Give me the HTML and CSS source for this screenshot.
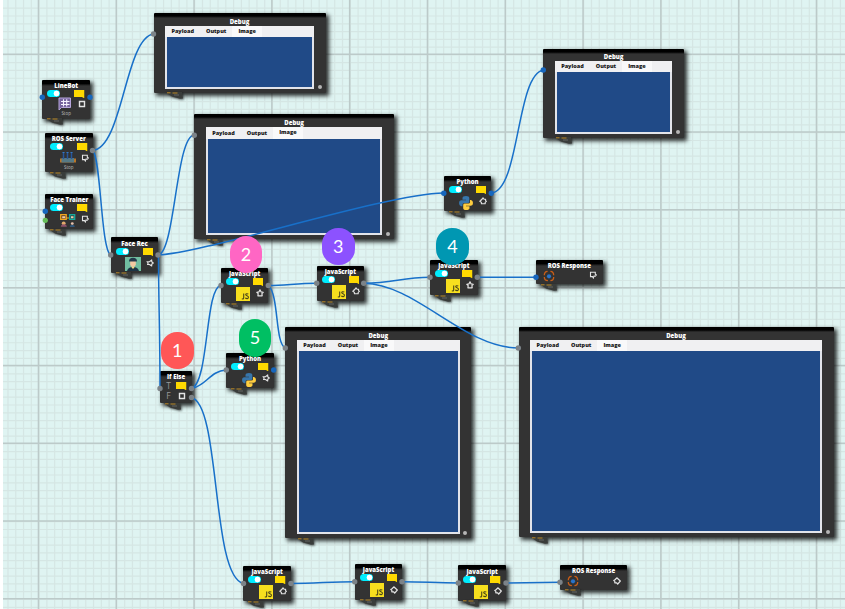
FILE: index.html
```html
<!DOCTYPE html>
<html lang="en">
<head>
<meta charset="utf-8">
<title>Flow editor</title>
<link rel="stylesheet" href="styles.css">
</head>
<body>
<svg class="defs" width="0" height="0" aria-hidden="true">
  <symbol id="note" viewBox="0 0 10 8"><path d="M0 0h10v8l-2.4-1.3H0z" fill="#ffd900"/></symbol>
  <symbol id="gear" viewBox="0 0 8 8"><path d="M4 .8 5 2.2h1.6v1.4L7.4 4.4 6.2 5.4v1.4H2.4V5.4L.8 4.2 2.2 3.2V2.2H3.200z" fill="none" stroke="#e4e4e4" stroke-width="1.1" stroke-linejoin="round"/></symbol>
  <symbol id="star" viewBox="0 0 8 8"><path d="M4 .9 5 2.800 7.200 3.300 5.900 4.700 6.200 6.800H1.900L2.200 4.700.8 3.300 3 2.800z" fill="none" stroke="#e4e4e4" stroke-width="1.2" stroke-linejoin="round"/></symbol>
  <symbol id="diamond" viewBox="0 0 8 8"><path d="M3.800.8 7.300 4 4.700 7.200 3.700 5.800H1.800V4.300L.8 3.600 2.300 2.500z" fill="none" stroke="#e4e4e4" stroke-width="1.200" stroke-linejoin="round"/></symbol>
  <symbol id="horn" viewBox="0 0 8 8"><path d="M1 2.700H3.500L5.700.9V2.700L7.300 4 5.700 5.300V7L3.500 5.500H1.500L2.200 4z" fill="none" stroke="#e4e4e4" stroke-width="1.100" stroke-linejoin="round"/></symbol>
  <symbol id="box" viewBox="0 0 8 8"><path d="M1.500 1.500h5v5h-5z" fill="none" stroke="#e4e4e4" stroke-width="1.400"/></symbol>
  <symbol id="tagbox" viewBox="0 0 8 8"><path d="M1.500 1.300H6.300V3.200L7.300 4 6.300 5.100H5L4.300 7 3.500 5.600H1.500z" fill="none" stroke="#e4e4e4" stroke-width="1.100"/></symbol>
  <symbol id="js" viewBox="0 0 14 14"><path d="M0 0h14v14H0z" fill="#f7df1e"/><path d="M7.700 6.500v4.600q0 1.200-1.900.7M12.300 7.100q-2.600-1-2.600.4 0 .8 1.300 1.200 1.700.6 1.400 1.900-.6 1.800-3.200.5" fill="none" stroke="#4a4618" stroke-width="1.100"/></symbol>
  <symbol id="python" viewBox="0 0 14 14"><path d="M7 0Q3.500 0 3.500 2v1.700H7v.6H2Q0 4.300 0 7t2 3.200h1.500V8.500Q3.500 7 5.200 7h3.500q1.600 0 1.600-1.500V2Q10.300 0 7 0" fill="#3776ab"/><path d="M7 14q3.500 0 3.500-2v-1.700H7v-.6h5q2 0 2-2.700t-2-3h-1v2.200Q11 7.600 9.300 7.600H5.800Q4.200 7.600 4.200 9v3q0 2 2.800 2" fill="#ffce3f"/></symbol>
  <symbol id="hash" viewBox="0 0 14 14"><path d="M1 1h11.500v9.500H3.500L1 13z" fill="#75639e" stroke="#b7a6dc"/><path d="M3 4.500h8.500M3 7.500h8.500M5.500 2.200v7.300M8.700 2.200v7.300" stroke="#f5f1ff" stroke-width="1.100"/></symbol>
  <symbol id="server" viewBox="0 0 16 14"><path d="M0 7.500h16v4H0z" fill="#b87528"/><path d="M1.500 7h12.500v4.500H1.500z" fill="#567985"/><path d="M3.500 1v7M7.500 1v7M11.500 1v7" stroke="#27569b" stroke-width="1.500"/><path d="M2.500 1.500h2M6.500 1.500h2M10.500 1.500h2" stroke="#3478c4"/></symbol>
  <symbol id="faces" viewBox="0 0 16 14"><path d="M.7.700h5.500v4.600H.7z" fill="#5a3c28" stroke="#f0a71d" stroke-width="1.300"/><path d="M9.700.7h5v4.600h-5z" fill="#264d50" stroke="#16a99b" stroke-width="1.300"/><path d="M2.200 2.300h3v2h-3zM11 2.200h2.500v2H11z" fill="#f4cda8"/><path d="M6 4h3" stroke="#eeb020"/><circle cx="3.700" cy="9.300" r="1.900" fill="#e2a96a"/><path d="M.8 12.800q0-2.600 3-2.600t3 2.600z" fill="#8f526a"/><circle cx="12.300" cy="9.600" r="1.400" fill="#e8c3ae"/><path d="M9.700 12.900q0-2.200 2.600-2.200t2.600 2.200z" fill="#31567a"/></symbol>
  <symbol id="face" viewBox="0 0 16 14"><path d="M0 0h16v14H0z" fill="#70bda0"/><path d="M2 14q1-4 6-4t6 4z" fill="#1d3445"/><path d="M5.200 4h5.600v3.500Q10.500 10 8 10T5.200 7.500z" fill="#f3c9a2"/><path d="M4 4.500Q4 .8 8 .8t4 3.700z" fill="#243a4c"/><path d="m6.300 10 1.700 2 1.700-2" fill="#f6df83"/></symbol>
  <symbol id="ros" viewBox="0 0 12 12"><path d="M4.600 1.300Q1.300 1.500 1.300 5.200M7.400 1.300Q10.700 1.500 10.700 5.200M1.300 7Q1.300 10.500 4.900 10.700M10.700 7Q10.700 10.500 7.400 10.700" fill="none" stroke="#c85e18" stroke-width="1.300"/><circle cx="6" cy="6.300" r="2.100" fill="#2873c9"/></symbol>
  <symbol id="pencil" viewBox="0 0 18 8"><path d="M0 0h16l1 6.500-3 .2L6 4.500z" fill="#393c3a"/><path d="M1 .8h3.500M6.500 1h5" stroke="#b88423" stroke-width="1"/><path d="M8 3h5" stroke="#777" stroke-width=".7"/></symbol>
</svg>
<main class="canvas">
<svg class="grid" width="842" height="609">
  <g class="minor">
    <line x1="4.380" y1="304.500" x2="842" y2="304.500" stroke-width="609"/>
    <line x1="421" y1="7.620" x2="421" y2="609" stroke-width="842"/>
  </g>
  <g class="major">
    <line x1="34.700" y1="304.500" x2="842" y2="304.500" stroke-width="609"/>
    <line x1="421" y1="53.500" x2="421" y2="609" stroke-width="842"/>
  </g>
</svg>

<section class="debug d1"><h2>Debug</h2><div class="panel"><nav><span>Payload</span><span>Output</span><span class="on">Image</span></nav><div class="view"></div></div><i class="knob"></i><svg class="stub"><use href="#pencil"/></svg></section>
<section class="debug d2"><h2>Debug</h2><div class="panel"><nav><span>Payload</span><span>Output</span><span class="on">Image</span></nav><div class="view"></div></div><i class="knob"></i><svg class="stub"><use href="#pencil"/></svg></section>
<section class="debug d3"><h2>Debug</h2><div class="panel"><nav><span>Payload</span><span>Output</span><span class="on">Image</span></nav><div class="view"></div></div><i class="knob"></i><svg class="stub"><use href="#pencil"/></svg></section>
<section class="debug d4"><h2>Debug</h2><div class="panel"><nav><span>Payload</span><span>Output</span><span class="on">Image</span></nav><div class="view"></div></div><i class="knob"></i><svg class="stub"><use href="#pencil"/></svg></section>
<section class="debug d5"><h2>Debug</h2><div class="panel"><nav><span>Payload</span><span>Output</span><span class="on">Image</span></nav><div class="view"></div></div><i class="knob"></i><svg class="stub"><use href="#pencil"/></svg></section>

<section class="node tall linebot"><h2>LineBot</h2><div class="top"><i class="toggle"></i><svg class="note"><use href="#note"/></svg></div><div class="low"><svg class="art"><use href="#hash"/></svg><svg class="gear"><use href="#box"/></svg></div><small>Stop</small><svg class="stub"><use href="#pencil"/></svg></section>
<section class="node tall server"><h2>ROS Server</h2><div class="top"><i class="toggle"></i><svg class="note"><use href="#note"/></svg></div><div class="low"><svg class="art wide"><use href="#server"/></svg><svg class="gear"><use href="#tagbox"/></svg></div><small>Stop</small><svg class="stub"><use href="#pencil"/></svg></section>
<section class="node trainer"><h2>Face Trainer</h2><div class="top"><i class="toggle"></i><svg class="note"><use href="#note"/></svg></div><div class="low"><svg class="art wide"><use href="#faces"/></svg><svg class="gear"><use href="#tagbox"/></svg></div><svg class="stub"><use href="#pencil"/></svg></section>
<section class="node facerec"><h2>Face Rec</h2><div class="top"><i class="toggle"></i><svg class="note"><use href="#note"/></svg></div><div class="low"><svg class="art wide"><use href="#face"/></svg><svg class="gear"><use href="#horn"/></svg></div><svg class="stub"><use href="#pencil"/></svg></section>
<section class="node py1"><h2>Python</h2><div class="top"><i class="toggle"></i><svg class="note"><use href="#note"/></svg></div><div class="low"><svg class="art"><use href="#python"/></svg><svg class="gear"><use href="#gear"/></svg></div><svg class="stub"><use href="#pencil"/></svg></section>
<section class="node py2"><h2>Python</h2><div class="top"><i class="toggle"></i><svg class="note"><use href="#note"/></svg></div><div class="low"><svg class="art"><use href="#python"/></svg><svg class="gear"><use href="#horn"/></svg></div><svg class="stub"><use href="#pencil"/></svg></section>
<section class="node js1"><h2>JavaScript</h2><div class="top"><i class="toggle"></i><svg class="note"><use href="#note"/></svg></div><div class="low"><svg class="art"><use href="#js"/></svg><svg class="gear"><use href="#star"/></svg></div><svg class="stub"><use href="#pencil"/></svg></section>
<section class="node js2"><h2>JavaScript</h2><div class="top"><i class="toggle"></i><svg class="note"><use href="#note"/></svg></div><div class="low"><svg class="art"><use href="#js"/></svg><svg class="gear"><use href="#gear"/></svg></div><svg class="stub"><use href="#pencil"/></svg></section>
<section class="node js3"><h2>JavaScript</h2><div class="top"><i class="toggle"></i><svg class="note"><use href="#note"/></svg></div><div class="low"><svg class="art"><use href="#js"/></svg><svg class="gear"><use href="#star"/></svg></div><svg class="stub"><use href="#pencil"/></svg></section>
<section class="node js4"><h2>JavaScript</h2><div class="top"><i class="toggle"></i><svg class="note"><use href="#note"/></svg></div><div class="low"><svg class="art"><use href="#js"/></svg><svg class="gear"><use href="#gear"/></svg></div><svg class="stub"><use href="#pencil"/></svg></section>
<section class="node js5"><h2>JavaScript</h2><div class="top"><i class="toggle"></i><svg class="note"><use href="#note"/></svg></div><div class="low"><svg class="art"><use href="#js"/></svg><svg class="gear"><use href="#diamond"/></svg></div><svg class="stub"><use href="#pencil"/></svg></section>
<section class="node js6"><h2>JavaScript</h2><div class="top"><i class="toggle"></i><svg class="note"><use href="#note"/></svg></div><div class="low"><svg class="art"><use href="#js"/></svg><svg class="gear"><use href="#diamond"/></svg></div><svg class="stub"><use href="#pencil"/></svg></section>
<section class="node ifelse"><h2>If Else</h2><div class="branch"><b>T</b><svg class="note"><use href="#note"/></svg></div><div class="branch"><b>F</b><svg class="gear"><use href="#box"/></svg></div><svg class="stub"><use href="#pencil"/></svg></section>
<section class="node resp r1"><h2>ROS Response</h2><div class="reply"><svg class="ring"><use href="#ros"/></svg><svg class="gear"><use href="#tagbox"/></svg></div><svg class="stub"><use href="#pencil"/></svg></section>
<section class="node resp r2"><h2>ROS Response</h2><div class="reply"><svg class="ring"><use href="#ros"/></svg><svg class="gear"><use href="#diamond"/></svg></div><svg class="stub"><use href="#pencil"/></svg></section>

<svg class="wires" viewBox="0 0 845 609">
  <g class="links">
    <path d="M92.500 150.500C123 148 125 38 153.500 34"/>
    <path d="M93 150.500C101 160 101 250 110.700 255"/>
    <path d="M158.500 255C175 251 176 137 194 135"/>
    <path d="M158.500 255C205 253 385 194 443.700 193"/>
    <path d="M158.500 255C158.500 300 160 330 160 388.500"/>
    <path d="M491.500 193C520 190 516 75 543.300 70"/>
    <path d="M191.500 388.500C209 383 205 288 220.700 285.500"/>
    <path d="M191.500 388.500C206 386 210 371 226 370"/>
    <path d="M191.500 397.500C221 405 211 577 243.500 583.500"/>
    <path d="M268.500 285.500C287 285 298 283.500 316.700 283.300"/>
    <path d="M268.500 285.500C279 295 275 344 285.300 348"/>
    <path d="M364 283.300C393 283 402 277.500 430 277.300"/>
    <path d="M364 283.300C416 284 464 348 518.300 348"/>
    <path d="M477.500 277.300H536"/>
    <path d="M291 583.500C315 583.500 331 581.700 354.700 581.700"/>
    <path d="M402 581.700C425 581.700 435 583 458.300 583"/>
    <path d="M506 583 560 582.200"/>
  </g>
  <g class="ports">
    <circle cx="92.500" cy="150.500" r="2.700"/><circle cx="153.500" cy="34" r="2.700"/><circle cx="110.700" cy="255" r="2.700"/><circle cx="158" cy="255" r="2.700"/><circle cx="194.300" cy="135.300" r="2.700"/><circle cx="160" cy="388.500" r="2.700"/><circle cx="191.500" cy="388.500" r="2.700"/><circle cx="191.500" cy="397.500" r="2.700"/><circle cx="221" cy="285.500" r="2.700"/><circle cx="268.300" cy="285.500" r="2.700"/><circle cx="226.300" cy="370" r="2.700"/><circle cx="316.700" cy="283.300" r="2.700"/><circle cx="363.700" cy="283.300" r="2.700"/><circle cx="430" cy="277.300" r="2.700"/><circle cx="477.300" cy="277.300" r="2.700"/><circle cx="285.300" cy="348" r="2.700"/><circle cx="518.300" cy="348" r="2.700"/><circle cx="243.500" cy="583.500" r="2.700"/><circle cx="291" cy="583.500" r="2.700"/><circle cx="354.700" cy="581.700" r="2.700"/><circle cx="402" cy="581.700" r="2.700"/><circle cx="458.300" cy="583" r="2.700"/><circle cx="506" cy="583" r="2.700"/><circle cx="560" cy="582.200" r="2.700"/>
    <g class="live"><circle cx="42.300" cy="97.200" r="2.700"/><circle cx="90" cy="97.200" r="2.700"/><circle cx="45.300" cy="211.300" r="2.700"/><circle cx="443.800" cy="193.300" r="2.700"/><circle cx="491.300" cy="193.300" r="2.700"/><circle cx="543.300" cy="70" r="2.700"/><circle cx="273.700" cy="370" r="2.700"/><circle cx="536" cy="277.300" r="2.700"/></g>
    <circle class="ok" cx="45.300" cy="220.300" r="2.600"/>
  </g>
</svg>

<span class="badge b1">1</span>
<span class="badge b2">2</span>
<span class="badge b3">3</span>
<span class="badge b4">4</span>
<span class="badge b5">5</span>
</main>
</body>
</html>
```
FILE: styles.css
```css
* { box-sizing: border-box; }
body { margin: 0; background: #fff; overflow: hidden; font-family: "Open Sans", "Noto Sans", sans-serif; }
.defs { position: absolute; }
svg { display: block; flex: none; }

.canvas {
  position: relative;
  width: 845px;
  height: 609px;
  border-left: 3px solid #fff;
  overflow: hidden;
  background: #dff4f2;
}
.grid { position: absolute; left: 0; top: 0; }
.minor { stroke: #d5e6e4; stroke-dasharray: 1.200 6.580; }
.major { stroke: #bccac9; stroke-dasharray: 1.500 76.300; }

h2 { margin: 0; color: #fff; font-size: 6px; line-height: 6px; font-weight: 800; text-align: center; white-space: nowrap; }

.node, .debug {
  position: absolute;
  display: flex;
  flex-direction: column;
  background: #333;
  border-radius: 1px;
  box-shadow: 2.500px 2.500px 4px rgba(0, 0, 0, .8);
}
.node { width: 47.600px; height: 35.600px; border-top: 3px solid #000; }
.node.tall { height: 39px; }
.node h2 { margin-top: -1px; height: 7px; padding-top: 1.300px; background: linear-gradient(#000 1.500px, #333 4px); }
.top { display: flex; justify-content: space-between; align-items: flex-start; padding: 1.300px 5px 0; height: 11px; }
.toggle { width: 13px; height: 7px; border-radius: 4px; background: radial-gradient(circle at 9.500px 3.500px, #fff 2.600px, transparent 3.200px), #00edff; }
.note { width: 10.500px; height: 8.500px; }
.low { display: flex; align-items: flex-start; padding-left: 15.500px; gap: 6px; height: 14px; }
.art { width: 14px; height: 14px; }
.js1 .art, .js2 .art, .js3 .art, .js4 .art, .js5 .art, .js6 .art { margin-top: -.8px; }
.art.wide { width: 16px; margin: 0 -1px; }
.gear { width: 8px; height: 8px; margin-top: 1.500px; }
.node small { color: #bbb; font-size: 4.500px; line-height: 5px; text-align: center; }
.stub { position: absolute; left: 4px; top: 100%; width: 18px; height: 8px; margin-top: -.5px; filter: drop-shadow(1.500px 1.500px 1px rgba(0, 0, 0, .6)); }
.tall .low { height: 11.500px; }
.tall .art { margin-top: -2.500px; }
.tall .gear { margin-top: .5px; }

.node.ifelse { width: 31.600px; height: 32px; }
.branch { display: flex; gap: 5px; padding-left: 6px; height: 10px; }
.branch b { width: 5px; margin-top: 1px; color: #999; font-size: 8.500px; line-height: 9px; font-weight: 400; }
.branch .note { margin-top: 1.500px; }
.branch .gear { margin: 2px 0 0 2px; }
.node.resp { width: 66.500px; height: 24.500px; }
.reply { display: flex; justify-content: space-between; padding: 1px 6px 0 6.500px; }
.ring { width: 12px; height: 12px; }

.debug { border-top: 3.600px solid #000; padding: 0 11.700px 4px; }
.debug h2 { height: 9.500px; padding-top: 2.600px; background: linear-gradient(#000, #333 2px); margin: 0 -11.700px; }
.panel { flex: 1; display: flex; flex-direction: column; background: #e2e4ea; padding: 0 2px 2px 1.700px; }
.panel nav { display: flex; height: 11px; background: #f0f0f2; margin: 0 -2px 0 -1.700px; color: #151515; font-size: 5.500px; line-height: 11.500px; font-weight: 800; }
.panel span { width: 35px; text-align: center; white-space: nowrap; }
.panel span:nth-child(2) { width: 32px; }
.panel span.on { width: 30px; background: #f9f9fa; }
.view { flex: 1; background: #204a87; }
.knob { position: absolute; right: 4px; bottom: 3.500px; width: 4px; height: 4px; border-radius: 50%; background: #b5b5b5; }
.debug .stub { left: 12px; }

.linebot { left: 39.400px; top: 79.700px; }
.server { left: 42px; top: 133px; }
.trainer { left: 42.400px; top: 193.800px; }
.facerec { left: 107.700px; top: 237.300px; }
.py1 { left: 440.700px; top: 175.600px; }
.py2 { left: 223.200px; top: 352.700px; }
.js1 { left: 217.800px; top: 267.700px; }
.js2 { left: 313.500px; top: 265.700px; }
.js3 { left: 427px; top: 259.800px; }
.js4 { left: 240.300px; top: 565.700px; }
.js5 { left: 351.700px; top: 564px; }
.js6 { left: 455.300px; top: 565.300px; }
.ifelse { left: 157.300px; top: 371px; }
.r1 { left: 533px; top: 259.600px; }
.r2 { left: 557.300px; top: 565px; }

.d1 { left: 150.500px; top: 13px; width: 172px; height: 79.500px; }
.d2 { left: 191.300px; top: 114px; width: 199.700px; height: 125px; }
.d3 { left: 540.300px; top: 48.700px; width: 140.700px; height: 89px; }
.d4 { left: 282.300px; top: 327px; width: 186px; height: 211px; }
.d5 { left: 515.500px; top: 327px; width: 315px; height: 210px; }
.d2 nav { height: 12.400px; line-height: 13.500px; }
.d2 .on { line-height: 11px; }

.wires { position: absolute; left: -3px; top: 0; width: 845px; height: 609px; }
.links { fill: none; stroke: #1870c9; stroke-width: 1.500; }
.ports { fill: #7c8388; }
.live { fill: #1767bd; }
.ok { fill: #65bd59; }

.badge {
  position: absolute;
  width: 32.500px;
  height: 37.500px;
  border-radius: 16px;
  color: #fff;
  font: 400 18px/36px Lato, sans-serif;
  text-align: center;
}
.b1 { left: 158px; top: 331.700px; background: #ff5757; }
.b2 { left: 226.800px; top: 235.700px; background: #ff66c4; }
.b3 { left: 319px; top: 227.500px; background: #8c52ff; }
.b4 { left: 433.200px; top: 227.500px; background: #0097b2; }
.b5 { left: 235.700px; top: 319px; background: #00bf63; }
```
